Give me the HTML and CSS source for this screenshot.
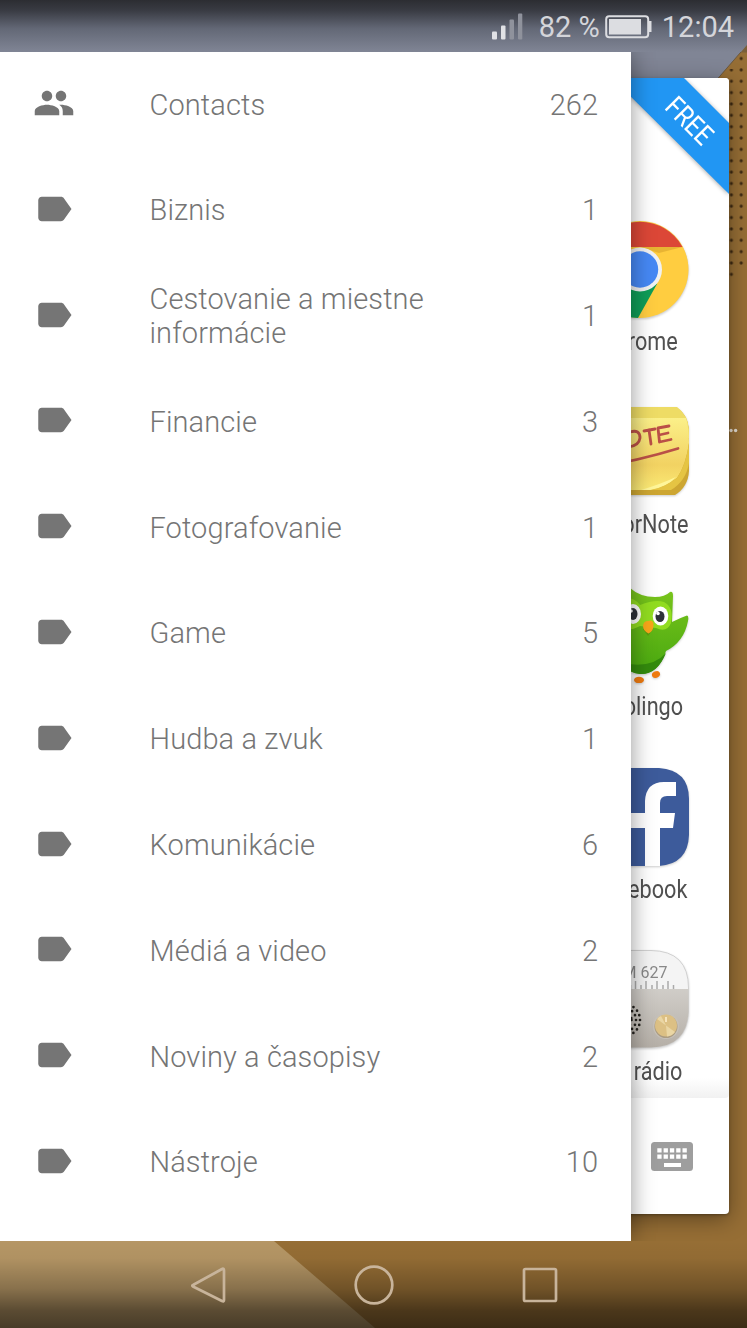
FILE: index.html
```html
<!DOCTYPE html>
<html lang="sk">
<head>
<meta charset="utf-8">
<title>Drawer</title>
<link rel="stylesheet" href="styles.css">
</head>
<body>
<svg class="defs" width="0" height="0" aria-hidden="true">
  <symbol id="tag" viewBox="0 0 24 24"><path d="M17.63 5.84C17.27 5.33 16.67 5 16 5L5 5.01C3.9 5.01 3 5.9 3 7v10c0 1.1.9 1.99 2 1.99L16 19c.67 0 1.27-.33 1.63-.84L22 12l-4.37-6.16z"/></symbol>
  <symbol id="people" viewBox="0 0 24 24"><path d="M16 11c1.66 0 2.99-1.34 2.99-3S17.66 5 16 5s-3 1.34-3 3 1.34 3 3 3zm-8 0c1.66 0 2.99-1.34 2.99-3S9.66 5 8 5 5 6.34 5 8s1.34 3 3 3zm0 2c-2.33 0-7 1.17-7 3.5V19h14v-2.500c0-2.33-4.67-3.5-7-3.500zm8 0c-.29 0-.62.02-.97.05 1.16.84 1.97 1.97 1.97 3.45V19h6v-2.500c0-2.33-4.67-3.5-7-3.500z"/></symbol>
</svg>
<div class="phone">
  <svg class="wallpaper" viewBox="0 0 747 1328" aria-hidden="true">
    <defs>
      <linearGradient id="top" x1="0" y1="0" x2="0" y2="1"><stop offset="0" stop-color="#2c2d32"/><stop offset=".2" stop-color="#393b43"/><stop offset=".55" stop-color="#636876"/><stop offset="1" stop-color="#808595"/></linearGradient>
      <linearGradient id="dim" x1="0" y1="0" x2="0" y2="1"><stop offset="0" stop-color="#000" stop-opacity="0"/><stop offset=".2" stop-color="#000" stop-opacity=".03"/><stop offset=".55" stop-color="#000" stop-opacity=".25"/><stop offset=".8" stop-color="#000" stop-opacity=".5"/><stop offset="1" stop-color="#000" stop-opacity=".6"/></linearGradient>
      <pattern id="dots" x="726.5" y="64.2" width="9.8" height="11.36" patternUnits="userSpaceOnUse"><circle cx="4.9" cy="5.7" r="1.6" fill="#3e2a12"/></pattern>
    </defs>
    <rect width="747" height="1328" fill="#966e35"/>
    <path d="M0 0H747V45L690 110H0z" fill="#808595"/>
    <path d="M747 45L714 83" stroke="#6b5940" stroke-width="1"/>
    <rect width="747" height="52" fill="url(#top)"/>
    <path d="M747 45l-6.500 7.400H747z" fill="#7a5f38"/>
    <path d="M726 69H736.500V280H726zM736.500 52.800H747V268H736.500z" fill="url(#dots)"/>
    <path d="M0 1241H274L375 1328H0z" fill="#b59665"/>
    <rect y="1241" width="747" height="87" fill="url(#dim)"/>
    <g fill="#e4ddd2"><circle cx="731" cy="430.500" r="1.700"/><circle cx="735.600" cy="430.500" r="1.700"/></g>
  </svg>

  <header class="status">
    <svg class="signal" viewBox="0 0 32 28"><g fill="#e0e1e5"><rect x="1" y="18.500" width="5" height="8" rx="1"/><rect x="10" y="12.500" width="4.500" height="14" rx="1"/></g><g fill="#8f929c"><rect x="18.500" y="6.500" width="4.500" height="20" rx="1"/><rect x="27" y="0.500" width="4.300" height="26" rx="1"/></g></svg>
    <span class="percent">82 %</span>
    <svg class="battery" viewBox="0 0 47 24"><rect x="1.200" y="1.200" width="42" height="21" rx="3" fill="none" stroke="#dcdde1" stroke-width="2"/><rect x="4" y="4" width="32" height="15.500" fill="#dcdde1"/><path d="M44 6h2.500v11H44z" fill="#dcdde1"/></svg>
    <span class="clock">12:04</span>
  </header>

  <main class="stage">
    <section class="panel">
      <svg class="ribbon" viewBox="0 0 120 120">
        <path d="M3 0H75L120 45V116z" fill="#2196f3"/>
        <text class="ribbon-text" transform="translate(80.300 42.800) rotate(45) scale(.84 1)" text-anchor="middle" y="9.500">FREE</text>
      </svg>
      <ul class="apps">
        <li class="app">
          <svg class="app-icon" viewBox="0 0 98 98">
            <circle cx="49" cy="50" r="48.500" fill="#d5d5d5"/>
            <circle cx="49" cy="49.500" r="48.500" fill="#ffcd40"/>
            <path d="M91.500 27A48.500 48.500 0 0 0 6.500 27L30 60V27z" fill="#dc4737"/>
            <path d="M6.500 27A48.500 48.500 0 0 0 47 98L66 64 30 60z" fill="#0f9d58"/>
            <path d="M49 27H91.500L68 33z" fill="#d9a32c" opacity=".6"/>
            <circle cx="49" cy="49.500" r="22" fill="#f1f1f1"/><circle cx="49" cy="49.500" r="18.200" fill="#4688f4"/>
          </svg>
          <span class="app-name">Chrome</span>
        </li>
        <li class="app">
          <svg class="app-icon" viewBox="0 0 98 98">
            <defs><linearGradient id="note" x1="0" y1="0" x2="0" y2="1"><stop offset="0" stop-color="#fbf089"/><stop offset=".65" stop-color="#f2d262"/><stop offset="1" stop-color="#fbea75"/></linearGradient></defs>
            <path d="M15 5H86Q98 12 98 32V68Q97 84 84 92H15Q0 88 0 70V25Q0 8 15 5z" fill="#cda632"/>
            <path d="M15 4H86Q97 12 98 26V35H0V25Q0 8 15 4z" fill="#eedc65"/>
            <path d="M0 15H95Q98 24 98 40Q95 62 86 75Q74 84 59 87H0z" fill="url(#note)"/>
            <path d="M98 40Q95 62 86 75Q74 84 59 87H80Q95 78 98 60z" fill="#e5c443"/>
            <path d="M50 87Q70 81 85 74Q76 84 59 87z" fill="#fff69a"/>
            <g fill="none" stroke="#ba5047" stroke-width="2.800" stroke-linecap="round" stroke-linejoin="round"><path d="M39 29Q49 26 49 35Q48 43 37 44M53 28L64 26M58 27L60 41M78 23L67 25 68.500 39 80 36.500M68 32L77 30"/><path d="M5 66Q48 59 87 47" transform="translate(0 -1.500)"/></g>
          </svg>
          <span class="app-name">ColorNote</span>
        </li>
        <li class="app">
          <svg class="app-icon" viewBox="0 0 98 98">
            <defs><linearGradient id="owl" x1="0" y1="0" x2="0" y2="1"><stop offset="0" stop-color="#7ac51c"/><stop offset="1" stop-color="#48a810"/></linearGradient></defs>
            <path d="M39 3Q49 12 64 12Q74 12 79 7Q82 6 82 11L81 37Q89 33 96 30.500Q98 31 97 36Q93 57 75 66Q68 89 49 89Q30 87 22 66Q0 56 3 33L17 38 19 4z" fill="url(#owl)"/>
            <path d="M32 78Q61 84 75 68Q66 90 49 89Q38 88 32 78z" fill="#348b0d"/>
            <path d="M22 16Q40 8 49 20Q64 14 73 17Q83 22 80 38Q76 48 65 43L49 41Q34 49 24 39z" fill="#91dc20"/>
            <path d="M52 44h10L57 51z" fill="#5c9b10"/>
            <ellipse cx="42" cy="29" rx="8" ry="10" fill="#fff"/><ellipse cx="69.500" cy="31" rx="7.800" ry="9.500" fill="#fff"/>
            <ellipse cx="42" cy="29" rx="4.500" ry="6" fill="#2d3138"/><ellipse cx="69" cy="31.500" rx="4.500" ry="5.500" fill="#2d3138"/>
            <circle cx="40" cy="26" r="1.800" fill="#fff"/><circle cx="67" cy="28.500" r="1.800" fill="#fff"/>
            <path d="M57 36Q62 34 62.500 39Q63 46 57.500 48.500Q52 46 52 41Q52.500 36 57 36z" fill="#f9a61a"/>
            <ellipse cx="48" cy="95" rx="5" ry="3.300" fill="#ef7b10"/><ellipse cx="65" cy="89.500" rx="4.200" ry="3.200" transform="rotate(-25 65 89.500)" fill="#ef7b10"/>
          </svg>
          <span class="app-name">Duolingo</span>
        </li>
        <li class="app">
          <svg class="app-icon" viewBox="0 0 98 98">
            <path d="M30 0H68Q98 2 98 31V67Q97 96 68 98H30Q1 96 0 67V31Q1 2 30 0z" fill="#3d5b9b"/>
            <path d="M54 98V60H38V45H54V33Q55 14 73 14H85V28H76Q69 28 69 35V45H84L82 60H69V98z" fill="#fff"/>
          </svg>
          <span class="app-name">Facebook</span>
        </li>
        <li class="app">
          <svg class="app-icon" viewBox="0 0 98 98">
            <defs><linearGradient id="metal" x1="0" y1="0" x2="0" y2="1"><stop offset="0" stop-color="#d0cdc8"/><stop offset="1" stop-color="#b5afa7"/></linearGradient></defs>
            <path d="M30 .5H60Q97.500 1 97.500 38V62Q96 97 60 97.500H30Q1 96 .5 62V38Q1 2 30 .5z" fill="#f4f4f4" stroke="#d0d0d0"/>
            <path d="M.5 39H97.500V62Q96 97 60 97.500H30Q1 96 .5 62z" fill="url(#metal)"/>
            <path d="M34 39V35M39.500 39V35M44.500 39V31M50 39V35M55 39V31M61 39V35M66 39V31M72 39V35M77 39V31M82.500 39V35" stroke="#aaa" stroke-width="1.500"/>
            <text class="tuner" x="76.500" y="28" text-anchor="end">FM 627</text>
            <g fill="none" stroke="#25231f" stroke-width="2.700" stroke-linecap="round" stroke-dasharray="0 5"><circle cx="33" cy="70" r="16"/><circle cx="33" cy="70" r="12"/><circle cx="33" cy="70" r="7.500"/></g>
            <circle cx="75" cy="76" r="13" fill="#c6c1b9"/><circle cx="75" cy="76.500" r="11.500" fill="#ab9c83"/><circle cx="75" cy="75.500" r="11" fill="#dcc084"/>
            <path d="M75 75.500L66 69A11 11 0 0 1 70 66zM75 75.500L84 82A11 11 0 0 1 76 86.500z" fill="#ead6a4"/><path d="M75 67v5" stroke="#fff1d0" stroke-width="1.500"/>
          </svg>
          <span class="app-name">FM rádio</span>
        </li>
      </ul>
      <footer class="panel-foot">
        <svg class="keyboard" viewBox="0 0 42 29"><rect width="42" height="29" rx="3.500" fill="#9e9e9e"/><path d="M6.300 8.300H36.300M6.300 14.600H36.300" stroke="#fff" stroke-width="4.200" stroke-dasharray="4.300 2"/><path d="M13 21h17v4H13z" fill="#fff"/></svg>
      </footer>
    </section>

    <nav class="drawer">
      <ul class="list">
        <li class="row"><svg class="row-icon"><use href="#people"/></svg><span class="label">Contacts</span><span class="count">262</span></li>
        <li class="row"><svg class="row-icon"><use href="#tag"/></svg><span class="label">Biznis</span><span class="count">1</span></li>
        <li class="row"><svg class="row-icon"><use href="#tag"/></svg><span class="label">Cestovanie a miestne informácie</span><span class="count">1</span></li>
        <li class="row"><svg class="row-icon"><use href="#tag"/></svg><span class="label">Financie</span><span class="count">3</span></li>
        <li class="row"><svg class="row-icon"><use href="#tag"/></svg><span class="label">Fotografovanie</span><span class="count">1</span></li>
        <li class="row"><svg class="row-icon"><use href="#tag"/></svg><span class="label">Game</span><span class="count">5</span></li>
        <li class="row"><svg class="row-icon"><use href="#tag"/></svg><span class="label">Hudba a zvuk</span><span class="count">1</span></li>
        <li class="row"><svg class="row-icon"><use href="#tag"/></svg><span class="label">Komunikácie</span><span class="count">6</span></li>
        <li class="row"><svg class="row-icon"><use href="#tag"/></svg><span class="label">Médiá a video</span><span class="count">2</span></li>
        <li class="row"><svg class="row-icon"><use href="#tag"/></svg><span class="label">Noviny a časopisy</span><span class="count">2</span></li>
        <li class="row"><svg class="row-icon"><use href="#tag"/></svg><span class="label">Nástroje</span><span class="count">10</span></li>
      </ul>
    </nav>
  </main>

  <footer class="navbar">
    <svg class="nav-icon" viewBox="0 0 40 40"><path d="M5 20L34 4Q36 3 36 5.500V35Q36 37 34 36L5 21.500Q3.500 20.700 5 20z"/></svg>
    <svg class="nav-icon" viewBox="0 0 40 40"><circle cx="20" cy="20" r="18.300"/></svg>
    <svg class="nav-icon" viewBox="0 0 40 40"><rect x="4" y="4" width="32" height="32" rx="1.500"/></svg>
  </footer>
</div>
</body>
</html>
```
FILE: styles.css
```css
* { box-sizing: border-box; }
body { margin: 0; font-family: Roboto, "Noto Sans", sans-serif; }
ul { list-style: none; margin: 0; padding: 0; }
svg { display: block; flex: none; }
.defs { position: absolute; }

.phone { position: relative; display: flex; flex-direction: column; width: 747px; height: 1328px; overflow: hidden; }
.wallpaper { position: absolute; inset: 0; width: 747px; height: 1328px; }

.status { position: relative; height: 52px; display: flex; align-items: center; justify-content: flex-end; padding: 2px 13px 0 0; color: #d4d5da; font-size: 29px; }
.signal { width: 32px; height: 28px; margin-right: 16px; }
.battery { width: 47px; height: 24px; margin: 0 10px 0 5px; }

.stage { position: relative; height: 1189px; overflow: hidden; display: flex; }
.panel { position: relative; flex: 1; display: flex; flex-direction: column; margin: 26px 18px 27px; background: #fff; border-radius: 4px; box-shadow: 0 5px 22px rgba(0, 0, 0, .38), 0 1px 3px rgba(0, 0, 0, .3); }
.ribbon { position: absolute; top: 0; right: 0; width: 120px; height: 120px; filter: drop-shadow(0 1px 2px rgba(0, 0, 0, .35)); clip-path: inset(0); }
.ribbon-text { fill: #fff; font-size: 28px; }
.apps { height: 1020px; padding-top: 142px; display: flex; flex-direction: column; align-items: flex-end; background: linear-gradient(#fff 98%, #f1f1f1); border-radius: 4px; }
.app { width: 178px; height: 182.6px; flex: none; display: flex; flex-direction: column; align-items: center; gap: 7px; }
.app-icon { width: 98px; height: 98px; filter: drop-shadow(0 1px 1px rgba(0, 0, 0, .2)); }
.app-name { font-size: 25.5px; line-height: 32px; color: #505050; transform: scaleX(.85); white-space: nowrap; }
.tuner { font-size: 16px; fill: #888; }
.panel-foot { flex: 1; display: flex; align-items: center; justify-content: flex-end; padding-right: 36px; }
.keyboard { width: 42px; height: 29px; }

.drawer { position: absolute; left: 0; top: 0; bottom: 0; width: 631px; background: #fff; box-shadow: 0 0 22px rgba(0, 0, 0, .42); }
.list { margin-top: -1.9px; }
.row { height: 105.8px; display: flex; align-items: center; padding: 0 33px; color: #757575; font-size: 29px; font-weight: 300; line-height: 34px; }
.row-icon { width: 42px; height: 42px; fill: #757575; }
.label { width: 320px; margin-left: 74.5px; padding-top: 3px; letter-spacing: .1px; }
.count { margin-left: auto; padding-top: 3px; }

.navbar { position: relative; flex: 1; display: flex; justify-content: center; align-items: center; gap: 126px; }
.nav-icon { width: 40px; height: 40px; fill: none; stroke: #c8b49b; stroke-width: 2.7; }
```
